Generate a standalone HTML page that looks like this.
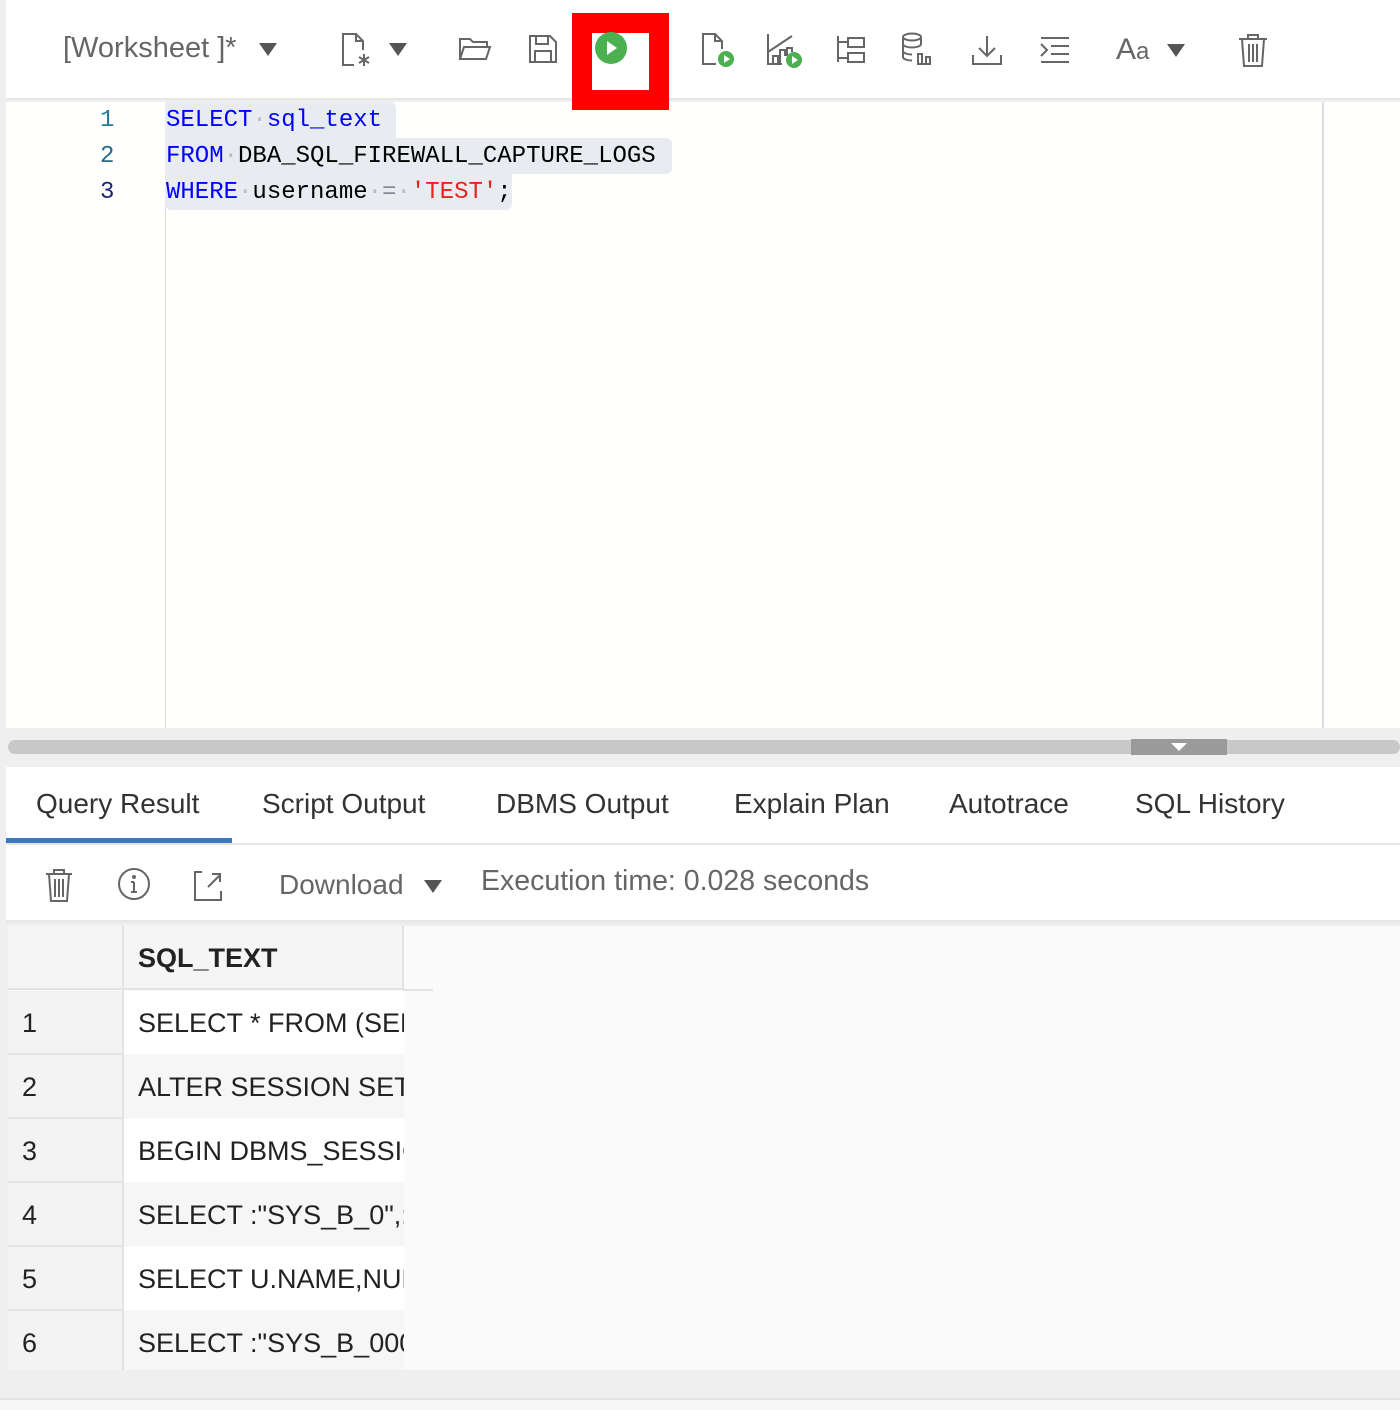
<!DOCTYPE html>
<html><head><meta charset="utf-8"><style>
*{margin:0;padding:0;box-sizing:border-box}
body{width:1400px;height:1410px;background:#efefef;font-family:"Liberation Sans",sans-serif;position:relative;overflow:hidden}
.a{position:absolute}
.mono{font-family:"Liberation Mono",monospace;font-size:24px;white-space:pre}
.tab{position:absolute;top:788px;font-size:28px;color:#333}
.cell{position:absolute;font-size:27px;color:#222;white-space:nowrap;overflow:hidden}
svg{position:absolute;fill:none;stroke:#666;stroke-width:2}
</style></head><body>
<!-- toolbar -->
<div class="a" style="left:6px;top:0;width:1394px;height:100px;background:#fff;border-bottom:2px solid #e6e6e6"></div>
<div class="a" style="left:63px;top:32px;font-size:29px;color:#666">[Worksheet ]*</div>
<div class="a" style="left:259px;top:43px;width:0;height:0;border-left:9px solid transparent;border-right:9px solid transparent;border-top:13px solid #555"></div>
<svg style="left:340px;top:32px" width="34" height="36" viewBox="0 0 34 36"><path d="M14 33H3V2h13l7 7v9M16 2v7h7M3 2"/><path d="M24 22v12M19 25l10 6M29 25l-10 6"/></svg>
<div class="a" style="left:389px;top:43px;border-left:9px solid transparent;border-right:9px solid transparent;border-top:13px solid #555"></div>
<svg style="left:458px;top:35px" width="34" height="28"><path d="M2 24V4h10l3 3h14v5M2 24l4-12h26l-4 12z"/></svg>
<svg style="left:527px;top:33px" width="32" height="32"><path d="M3 3h20l6 6v20H3zM9 3v8h12V3M8 29V18h16v11"/></svg>
<svg style="left:700px;top:32px" width="40" height="38"><path d="M16 32H3V2h12l7 7v8M15 2v7h7"/><circle cx="26" cy="27" r="8" fill="#4caf50" stroke="none"/><path d="M24 23l6 4-6 4z" fill="#fff" stroke="none"/></svg>
<svg style="left:765px;top:32px" width="42" height="38"><path d="M3 2v30h14M3 20L27 4M8 32v-8h5v8M15 32V18h5v6M22 24v-8h5v4"/><circle cx="29" cy="28" r="8" fill="#4caf50" stroke="none"/><path d="M27 24l6 4-6 4z" fill="#fff" stroke="none"/></svg>
<svg style="left:835px;top:34px" width="32" height="32"><path d="M3 2v26M3 8h10M3 24h10M13 4h16v9H13zM13 19h16v9H13z"/></svg>
<svg style="left:900px;top:32px" width="38" height="36"><ellipse cx="12" cy="5" rx="9" ry="3.5"/><path d="M3 5v20c0 2 4 3.5 9 3.5M3 12c0 2 4 3.5 9 3.5s9-1.5 9-3.5V5M3 19c0 2 4 3.5 9 3.5"/><path d="M18 32V22h4v10h4v-7h4v7z"/></svg>
<svg style="left:970px;top:34px" width="34" height="32"><path d="M17 2v20M9 14l8 8 8-8M3 21v9h28v-9"/></svg>
<svg style="left:1038px;top:35px" width="34" height="30"><path d="M3 3h28M13 11h18M13 19h18M3 27h28M3 9l6 6-6 6"/></svg>
<div class="a" style="left:1116px;top:33px;font-size:30px;color:#666">A<span style="font-size:24px">a</span></div>
<div class="a" style="left:1167px;top:44px;border-left:9px solid transparent;border-right:9px solid transparent;border-top:13px solid #555"></div>
<svg style="left:1237px;top:32px" width="32" height="36"><path d="M2 7h28M11 7V3h10v4M5 7l2 27h18l2-27M12 12v18M16 12v18M20 12v18"/></svg>
<!-- editor -->
<div class="a" style="left:6px;top:102px;width:1394px;height:626px;background:#fffffd"></div>
<div class="a" style="left:165px;top:102px;width:1px;height:626px;background:#ddd"></div>
<div class="a" style="left:1322px;top:102px;width:2px;height:626px;background:#ddd"></div>
<div class="a mono" style="left:100px;top:107px;color:#2a7a9a">1</div>
<div class="a mono" style="left:100px;top:143px;color:#2a6a8a">2</div>
<div class="a mono" style="left:100px;top:179px;color:#1a2570">3</div>
<div class="a" style="left:165px;top:102px;width:231px;height:36px;background:#e8ecf1;border-radius:0 6px 0 0"></div>
<div class="a" style="left:165px;top:138px;width:507px;height:36px;background:#e8ecf1;border-radius:0 6px 6px 0"></div>
<div class="a" style="left:165px;top:174px;width:347px;height:36px;background:#e8ecf1;border-radius:0 0 6px 6px"></div>
<div class="a mono" style="left:166px;top:107px;color:#00f">SELECT<span style="color:#bbb">·</span>sql_text</div>
<div class="a mono" style="left:166px;top:143px;color:#000"><span style="color:#00f">FROM</span><span style="color:#bbb">·</span>DBA_SQL_FIREWALL_CAPTURE_LOGS</div>
<div class="a mono" style="left:166px;top:179px;color:#000"><span style="color:#00f">WHERE</span><span style="color:#bbb">·</span>username<span style="color:#bbb">·</span><span style="color:#889">=</span><span style="color:#bbb">·</span><span style="color:#e8231d">'TEST'</span>;</div>
<!-- red box on top -->
<div class="a" style="left:572px;top:13px;width:97px;height:97px;border:20px solid #f00;background:#fff;z-index:5"></div>
<div class="a" style="left:595px;top:32px;width:32px;height:32px;border-radius:50%;background:#4caf50;z-index:6"></div>
<div class="a" style="left:607px;top:41px;border-top:7px solid transparent;border-bottom:7px solid transparent;border-left:10px solid #fff;z-index:7"></div>
<!-- splitter -->
<div class="a" style="left:8px;top:740px;width:1392px;height:14px;background:#c8c8c8;border-radius:7px"></div>
<div class="a" style="left:1131px;top:739px;width:96px;height:16px;background:#9a9a9a"></div>
<div class="a" style="left:1171px;top:743px;border-left:8px solid transparent;border-right:8px solid transparent;border-top:8px solid #fff"></div>
<!-- tabs -->
<div class="a" style="left:6px;top:767px;width:1394px;height:78px;background:#fff;border-bottom:2px solid #e6e6e6"></div>
<div class="a" style="left:6px;top:838px;width:226px;height:5px;background:#3a78c3"></div>
<div class="tab" style="left:36px">Query Result</div>
<div class="tab" style="left:262px">Script Output</div>
<div class="tab" style="left:496px">DBMS Output</div>
<div class="tab" style="left:734px">Explain Plan</div>
<div class="tab" style="left:949px">Autotrace</div>
<div class="tab" style="left:1135px">SQL History</div>
<!-- result toolbar -->
<div class="a" style="left:6px;top:845px;width:1394px;height:78px;background:#fff;border-bottom:3px solid #e8e8e8"></div>
<svg style="left:44px;top:867px" width="32" height="36"><path d="M2 7h26M10 7V3h10v4M5 7l2 27h16l2-27M11 12v18M15 12v18M19 12v18"/></svg>
<svg style="left:117px;top:867px" width="36" height="36"><circle cx="17" cy="17" r="15"/><path d="M17 15v10M14 25h6M14 15h3"/><circle cx="17" cy="10" r="1" fill="#666"/></svg>
<svg style="left:192px;top:869px" width="36" height="34"><path d="M10 3H3v28h26v-9M16 18L28 6M20 5h8v8"/></svg>
<div class="a" style="left:279px;top:869px;font-size:28px;color:#666">Download</div>
<div class="a" style="left:424px;top:880px;border-left:9px solid transparent;border-right:9px solid transparent;border-top:13px solid #555"></div>
<div class="a" style="left:481px;top:865px;font-size:28.5px;color:#666">Execution time: 0.028 seconds</div>
<!-- grid -->
<div class="a" style="left:8px;top:926px;width:1392px;height:444px;background:#fafafa"></div>
<div class="a" style="left:8px;top:926px;width:395px;height:64px;background:#f5f5f5;border-bottom:2px solid #e3e3e3"></div>
<div class="a" style="left:403px;top:989px;width:30px;height:2px;background:#e3e3e3"></div>
<div class="a" style="left:122px;top:926px;width:2px;height:444px;background:#e3e3e3"></div>
<div class="a" style="left:402px;top:926px;width:2px;height:64px;background:#e3e3e3"></div>
<div class="cell" style="left:138px;top:943px;font-weight:bold">SQL_TEXT</div>
<div class="a" style="left:8px;top:991px;width:114px;height:379px;background:#f3f3f3"></div>
<div class="a" style="left:124px;top:991px;width:280px;height:63px;background:#fff"></div>
<div class="a" style="left:124px;top:1055px;width:280px;height:63px;background:#f6f6f6"></div>
<div class="a" style="left:124px;top:1119px;width:280px;height:63px;background:#fff"></div>
<div class="a" style="left:124px;top:1183px;width:280px;height:63px;background:#f6f6f6"></div>
<div class="a" style="left:124px;top:1247px;width:280px;height:63px;background:#fff"></div>
<div class="a" style="left:124px;top:1311px;width:280px;height:59px;background:#f6f6f6"></div>
<div class="a" style="left:8px;top:1053px;width:114px;height:2px;background:#e3e3e3"></div>
<div class="a" style="left:8px;top:1117px;width:114px;height:2px;background:#e3e3e3"></div>
<div class="a" style="left:8px;top:1181px;width:114px;height:2px;background:#e3e3e3"></div>
<div class="a" style="left:8px;top:1245px;width:114px;height:2px;background:#e3e3e3"></div>
<div class="a" style="left:8px;top:1309px;width:114px;height:2px;background:#e3e3e3"></div>
<div class="cell" style="left:22px;top:1008px">1</div><div class="cell" style="left:138px;top:1008px;width:266px">SELECT * FROM (SELECT</div>
<div class="cell" style="left:22px;top:1072px">2</div><div class="cell" style="left:138px;top:1072px;width:266px">ALTER SESSION SET NLS</div>
<div class="cell" style="left:22px;top:1136px">3</div><div class="cell" style="left:138px;top:1136px;width:266px">BEGIN DBMS_SESSION</div>
<div class="cell" style="left:22px;top:1200px">4</div><div class="cell" style="left:138px;top:1200px;width:266px">SELECT :"SYS_B_0",:"S</div>
<div class="cell" style="left:22px;top:1264px">5</div><div class="cell" style="left:138px;top:1264px;width:266px">SELECT U.NAME,NULL</div>
<div class="cell" style="left:22px;top:1328px">6</div><div class="cell" style="left:138px;top:1328px;width:266px">SELECT :"SYS_B_000"</div>
<div class="a" style="left:0;top:1398px;width:1400px;height:12px;background:#f7f7f7;border-top:2px solid #e3e3e3"></div>
</body></html>
